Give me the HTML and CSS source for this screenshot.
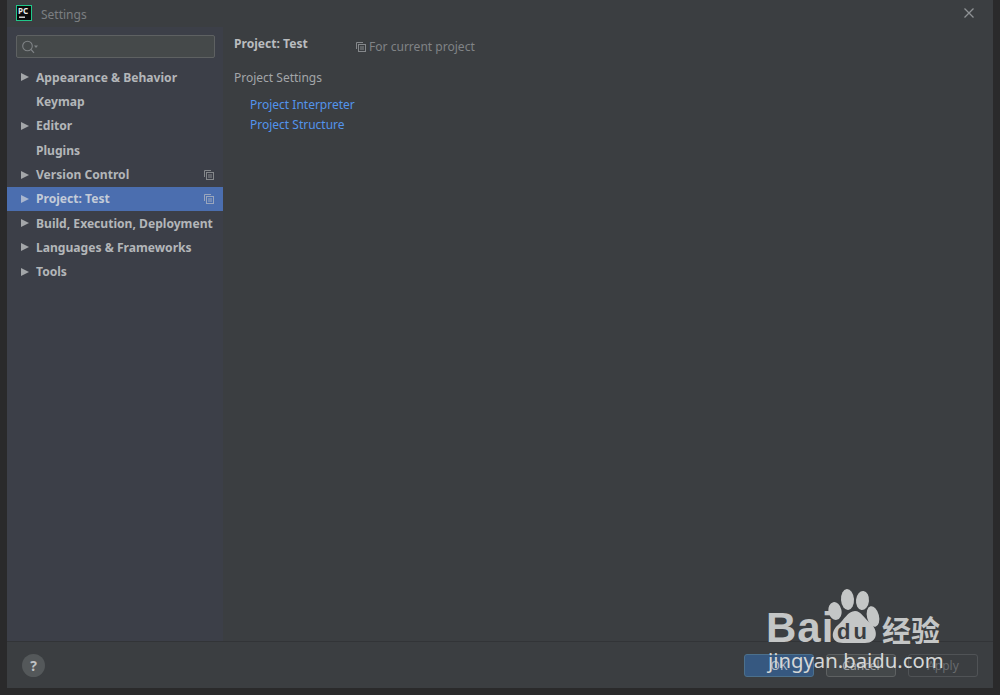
FILE: index.html
```html
<!DOCTYPE html>
<html lang="en">
<head>
<meta charset="utf-8">
<title>Settings</title>
<link rel="stylesheet" href="styles.css">
</head>
<body>
<div class="window">
  <header class="titlebar">
    <svg class="app-icon" width="16" height="16" viewBox="0 0 16 16"><rect x="0.5" y="0.5" width="15" height="15" fill="#0b0b0b" stroke="#21c78a"/><rect x="3" y="11.5" width="6" height="1.4" fill="#ddd"/></svg>
    <span class="app-pc">PC</span>
    <span class="title">Settings</span>
    <svg class="close" width="10" height="10" viewBox="0 0 10 10"><path d="M0.5 0.5L9.5 9.5M9.5 0.5L0.5 9.5" stroke="#8f9295" stroke-width="1.3" fill="none"/></svg>
  </header>
  <div class="body">
    <aside class="sidebar">
      <div class="search">
        <svg width="17" height="14" viewBox="0 0 17 14"><circle cx="6.5" cy="6" r="4.8" fill="none" stroke="#7f8386" stroke-width="1.1"/><path d="M10 9.5L13 12.8" stroke="#7f8386" stroke-width="1.2"/><path d="M13 5.5h4l-2 2.4z" fill="#7f8386"/></svg>
      </div>
      <nav class="tree">
        <div class="row"><i class="arrow"></i><span>Appearance &amp; Behavior</span></div>
        <div class="row"><i class="noarrow"></i><span>Keymap</span></div>
        <div class="row"><i class="arrow"></i><span>Editor</span></div>
        <div class="row"><i class="noarrow"></i><span>Plugins</span></div>
        <div class="row"><i class="arrow"></i><span>Version Control</span>
          <svg class="copy" width="10" height="10" viewBox="0 0 10 10"><path d="M0.5 7V.5H7" fill="none" stroke="#85888b"/><rect x="2.5" y="2.5" width="7" height="7" fill="none" stroke="#85888b"/><path d="M4 5h4M4 7h4" stroke="#85888b"/></svg></div>
        <div class="row selected"><i class="arrow"></i><span>Project: Test</span>
          <svg class="copy" width="10" height="10" viewBox="0 0 10 10"><path d="M0.5 7V.5H7" fill="none" stroke="#9aa6bd"/><rect x="2.5" y="2.5" width="7" height="7" fill="none" stroke="#9aa6bd"/><path d="M4 5h4M4 7h4" stroke="#9aa6bd"/></svg></div>
        <div class="row"><i class="arrow"></i><span>Build, Execution, Deployment</span></div>
        <div class="row"><i class="arrow"></i><span>Languages &amp; Frameworks</span></div>
        <div class="row"><i class="arrow"></i><span>Tools</span></div>
      </nav>
    </aside>
    <main class="content">
      <div class="heading">
        <h1>Project: Test</h1>
        <div class="scope">
          <svg width="10" height="10" viewBox="0 0 10 10"><path d="M0.5 7V.5H7" fill="none" stroke="#85888b"/><rect x="2.5" y="2.5" width="7" height="7" fill="none" stroke="#85888b"/><path d="M4 5h4M4 7h4" stroke="#85888b"/></svg>
          <span>For current project</span>
        </div>
      </div>
      <p class="section">Project Settings</p>
      <a class="link">Project Interpreter</a>
      <a class="link">Project Structure</a>
    </main>
  </div>
  <footer class="footer">
    <div class="help">?</div>
    <div class="buttons">
      <button class="btn primary">OK</button>
      <button class="btn">Cancel</button>
      <button class="btn disabled">Apply</button>
    </div>
  </footer>
</div>
<div class="watermark">
  <div class="wm-logo">
    <span class="wm-bai">Bai</span>
    <svg class="wm-paw" width="60" height="60" viewBox="0 0 60 60">
      <ellipse cx="7" cy="23" rx="6.5" ry="9" transform="rotate(-12 7 23)"/>
      <ellipse cx="19.5" cy="11.5" rx="6.5" ry="10.5" transform="rotate(-4 19.5 11.5)"/>
      <ellipse cx="34.5" cy="12.5" rx="6.5" ry="9.5" transform="rotate(6 34.5 12.5)"/>
      <ellipse cx="45" cy="28.5" rx="6" ry="10.5" transform="rotate(-14 45 28.5)"/>
      <path d="M27 23C33 23 36 30 42 35C51 42 50 55 37 55L15 55C3 55 2 44 10 37C16 32 20 23 27 23Z"/>
    </svg>
    <span class="wm-du">du</span>
    <span class="wm-cn">经验</span>
  </div>
  <div class="wm-url">jingyan.baidu.com</div>
</div>
</body>
</html>
```
FILE: styles.css
```css
* { box-sizing: border-box; }
html, body { margin: 0; height: 100%; }
body {
  width: 1000px;
  height: 695px;
  background: #2a2a2b;
  padding: 0 7px 7px;
  font-family: "Noto Sans", "Open Sans", sans-serif;
  position: relative;
  overflow: hidden;
}
.window {
  width: 986px;
  height: 688px;
  display: flex;
  flex-direction: column;
  background: #3b3e41;
}
.titlebar {
  height: 27px;
  flex: none;
  display: flex;
  align-items: center;
  padding: 0 19px 0 9px;
  position: relative;
}
.app-icon { flex: none; margin-bottom: 1px; }
.app-pc {
  position: absolute;
  left: 11px;
  top: 6px;
  font-size: 8px;
  line-height: 10px;
  font-weight: 700;
  color: #eee;
}
.title { margin-left: 9px; margin-top: 2px; font-size: 12px; color: #7b7e81; flex: 1; }
.close { flex: none; margin-bottom: 1px; }
.body { flex: 1; display: flex; min-height: 0; }
.sidebar {
  width: 216px;
  flex: none;
  background: #3c3f48;
  padding-top: 8px;
}
.search {
  height: 23px;
  margin: 0 8px 0 9px;
  background: #45494a;
  border: 1px solid #5e6162;
  border-radius: 2px;
  display: flex;
  align-items: center;
  padding-left: 4px;
}
.tree { margin-top: 7.2px; }
.row {
  height: 24.3px;
  display: flex;
  align-items: center;
  padding: 0 9px 0 14px;
  color: #b3b6b9;
  font-size: 12.1px;
  font-weight: 700;
}
.row span { flex: 1; white-space: nowrap; }
.row.selected { background: #4b6eaf; color: #c3cbd8; }
.arrow {
  width: 0; height: 0;
  border-left: 8px solid #a3a6a9;
  border-top: 4.5px solid transparent;
  border-bottom: 4.5px solid transparent;
  margin-right: 7px;
  flex: none;
}
.selected .arrow { border-left-color: #a9b6cf; }
.noarrow { width: 15px; flex: none; }
.copy { flex: none; }
.content { flex: 1; padding: 8px 11px; }
.heading { display: flex; align-items: flex-start; height: 34px; }
.heading h1 {
  margin: 0;
  width: 122px;
  font-size: 12.1px;
  line-height: 18px;
  font-weight: 700;
  color: #b9bcbf;
}
.scope {
  display: flex;
  align-items: center;
  gap: 3px;
  margin-top: 3px;
  font-size: 12.05px;
  line-height: 18px;
  color: #808386;
}
.section { margin: 0 0 9px; font-size: 12px; line-height: 18px; color: #a3a6a9; }
.link {
  display: block;
  margin-left: 16px;
  margin-bottom: 2px;
  font-size: 12px;
  line-height: 18px;
  color: #5394ec;
}
.footer {
  height: 47px;
  flex: none;
  border-top: 1px solid #323437;
  display: flex;
  align-items: center;
  justify-content: space-between;
  padding: 0 15px;
}
.help {
  width: 23px;
  height: 23px;
  border-radius: 50%;
  background: #54585a;
  color: #bfc2c4;
  font-size: 14px;
  font-weight: 700;
  display: flex;
  align-items: center;
  justify-content: center;
}
.buttons { display: flex; gap: 12px; }
.btn {
  width: 70px;
  height: 23px;
  padding: 0;
  border: 1px solid #5e6162;
  border-radius: 3px;
  background: #44484a;
  color: #a0a3a6;
  font: 12px "Noto Sans", sans-serif;
}
.btn.primary { background: #365880; border-color: #4c708c; color: #b0bcc9; }
.btn.disabled { background: transparent; border-color: #505356; color: #686b6e; }
.watermark {
  position: absolute;
  left: 768px;
  top: 588px;
  width: 180px;
  color: #c4c6c6;
}
.wm-logo { display: flex; height: 56px; position: relative; }
.wm-bai {
  position: absolute;
  left: -2px;
  top: 19px;
  font: 700 42px/42px "Liberation Sans", sans-serif;
  letter-spacing: 1px;
}
.wm-paw { position: absolute; left: 60px; top: 0; fill: #c4c6c6; }
.wm-du {
  position: absolute;
  left: 69px;
  top: 33px;
  font: 700 22px/22px "Liberation Sans", sans-serif;
  letter-spacing: 3px;
  color: #3b3e41;
}
.wm-cn {
  position: absolute;
  left: 114px;
  top: 23px;
  font: 700 29px/36px "Noto Sans CJK SC", sans-serif;
  white-space: nowrap;
}
.wm-url {
  position: absolute;
  left: 0;
  top: 58px;
  font: 20.3px/28px "Noto Sans", sans-serif;
  color: #d5d7d7;
  white-space: nowrap;
}
```
